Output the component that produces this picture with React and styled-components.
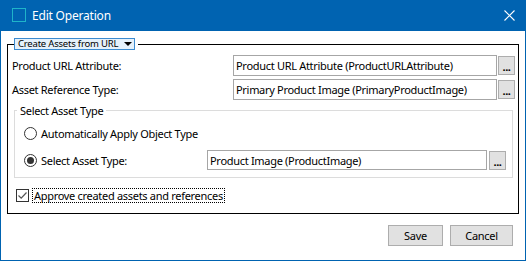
import React from "react";
import styled, { createGlobalStyle } from "styled-components";

const GlobalStyle = createGlobalStyle`
  html, body {
    margin: 0;
    padding: 0;
    background: #ffffff;
  }
  body {
    font-family: "Noto Sans", "Open Sans", sans-serif;
    font-size: 11px;
    letter-spacing: -0.3px;
    color: #000;
  }
  * {
    box-sizing: border-box;
  }
`;

const Window = styled.div`
  width: 526px;
  height: 261px;
  border: 1px solid #0063b1;
  border-top: none;
  display: flex;
  flex-direction: column;
  background: #fff;
`;

const TitleBar = styled.div`
  height: 31px;
  background: #0063b1;
  color: #fff;
  display: flex;
  align-items: center;
  padding: 0 10px 0 11px;
  gap: 6px;
  font-size: 12px;
  letter-spacing: -0.2px;
  flex-shrink: 0;
`;

const AppIcon = styled.span`
  width: 14px;
  height: 14px;
  border: 1.5px solid #1fb4c9;
  display: block;
  margin-top: -1px;
`;

const Title = styled.span`
  flex: 1;
  margin-top: -1px;
`;

const CloseIcon = styled.svg`
  width: 11px;
  height: 11px;
`;

const Body = styled.div`
  flex: 1;
  display: flex;
  flex-direction: column;
  padding: 7px 6px 0 6px;
`;

const GroupBox = styled.fieldset`
  margin: 0;
  border: 1px solid #000;
  padding: 5px 3px 11px 4px;
  min-width: 0;
  display: flex;
  flex-direction: column;
`;

const Legend = styled.legend`
  padding: 0 3px 0 0;
  margin-left: 2px;
`;

const Dropdown = styled.div`
  height: 12px;
  width: 121px;
  background: #e5f1fb;
  border: 1px solid #3c8bd0;
  display: flex;
  align-items: center;
  justify-content: space-between;
  padding: 0 2px 0 3px;
  font-size: 9.5px;
  line-height: 10px;
  letter-spacing: -0.2px;
  white-space: nowrap;
`;

const Caret = styled.span`
  width: 0;
  height: 0;
  border-left: 4px solid transparent;
  border-right: 4px solid transparent;
  border-top: 4px solid #000;
`;

const FieldRow = styled.div`
  display: grid;
  grid-template-columns: ${(p) => p.$labelWidth}px 1fr 17px;
  align-items: center;
  column-gap: ${(p) => p.$gap || 1}px;
  height: ${(p) => p.$height || 21}px;
  margin-bottom: ${(p) => p.$spacing || 0}px;
`;

const TextBox = styled.div`
  height: 100%;
  border: 1px solid #a6a6a6;
  display: flex;
  align-items: center;
  padding-left: 2px;
  white-space: nowrap;
  overflow: hidden;
`;

const BrowseButton = styled.div`
  height: 19px;
  background: #e1e1e1;
  border: 1px solid #adadad;
  display: flex;
  align-items: flex-end;
  justify-content: center;
  font-weight: bold;
  line-height: 14px;
  letter-spacing: -0.5px;
`;

const InnerGroup = styled.fieldset`
  margin: 3px 2px 0 2px;
  border: 1px solid #dcdcdc;
  padding: 5px 6px 7px 9px;
  min-width: 0;
  display: flex;
  flex-direction: column;
  gap: 7px;
`;

const InnerLegend = styled.legend`
  margin-left: -7px;
  padding: 0 3px;
`;

const OptionLabel = styled.label`
  display: flex;
  align-items: center;
  gap: 4px;
  height: 20px;
`;

const Radio = styled.span`
  width: 13px;
  height: 13px;
  border-radius: 50%;
  border: 1px solid #333;
  background: #fff;
  display: flex;
  align-items: center;
  justify-content: center;
  flex-shrink: 0;

  &::after {
    content: "";
    width: 7px;
    height: 7px;
    border-radius: 50%;
    background: ${(p) => (p.$checked ? "#333" : "transparent")};
  }
`;

const CheckRow = styled.div`
  display: flex;
  align-items: center;
  gap: 4px;
  margin: 11px 0 0 4px;
`;

const CheckBox = styled.span`
  width: 13px;
  height: 13px;
  border: 1px solid #333;
  display: flex;
  align-items: center;
  justify-content: center;
`;

const FocusLabel = styled.span`
  outline: 1px dotted #000;
  padding: 0 1px;
  line-height: 13px;
`;

const Footer = styled.div`
  display: flex;
  justify-content: flex-end;
  gap: 7px;
  margin: 11px 6px 0 0;
`;

const DialogButton = styled.div`
  width: ${(p) => p.$width}px;
  height: 21px;
  background: #e1e1e1;
  border: 1px solid #adadad;
  display: flex;
  align-items: center;
  justify-content: center;
`;

const App = () => {
  return (
    <>
      <GlobalStyle />
      <Window>
        <TitleBar>
          <AppIcon />
          <Title>Edit Operation</Title>
          <CloseIcon viewBox="0 0 11 11">
            <path d="M0.5 0.5 L10.5 10.5 M10.5 0.5 L0.5 10.5" stroke="#fff" strokeWidth="1.1" />
          </CloseIcon>
        </TitleBar>
        <Body>
          <GroupBox>
            <Legend>
              <Dropdown>
                <span>Create Assets from URL</span>
                <Caret />
              </Dropdown>
            </Legend>
            <FieldRow $labelWidth={220} $spacing={3}>
              <span>Product URL Attribute:</span>
              <TextBox>Product URL Attribute (ProductURLAttribute)</TextBox>
              <BrowseButton>...</BrowseButton>
            </FieldRow>
            <FieldRow $labelWidth={220}>
              <span>Asset Reference Type:</span>
              <TextBox>Primary Product Image (PrimaryProductImage)</TextBox>
              <BrowseButton>...</BrowseButton>
            </FieldRow>
            <InnerGroup>
              <InnerLegend>Select Asset Type</InnerLegend>
              <OptionLabel>
                <Radio />
                Automatically Apply Object Type
              </OptionLabel>
              <FieldRow $labelWidth={181} $gap={2} $height={20}>
                <OptionLabel>
                  <Radio $checked />
                  Select Asset Type:
                </OptionLabel>
                <TextBox>Product Image (ProductImage)</TextBox>
                <BrowseButton>...</BrowseButton>
              </FieldRow>
            </InnerGroup>
            <CheckRow>
              <CheckBox>
                <svg width="11" height="11" viewBox="0 0 11 11">
                  <path d="M1.5 5.5 L4.2 8.2 L9.5 2.5" fill="none" stroke="#555" strokeWidth="1.2" />
                </svg>
              </CheckBox>
              <FocusLabel>Approve created assets and references</FocusLabel>
            </CheckRow>
          </GroupBox>
          <Footer>
            <DialogButton $width={55}>Save</DialogButton>
            <DialogButton $width={63}>Cancel</DialogButton>
          </Footer>
        </Body>
      </Window>
    </>
  );
};

export default App;
